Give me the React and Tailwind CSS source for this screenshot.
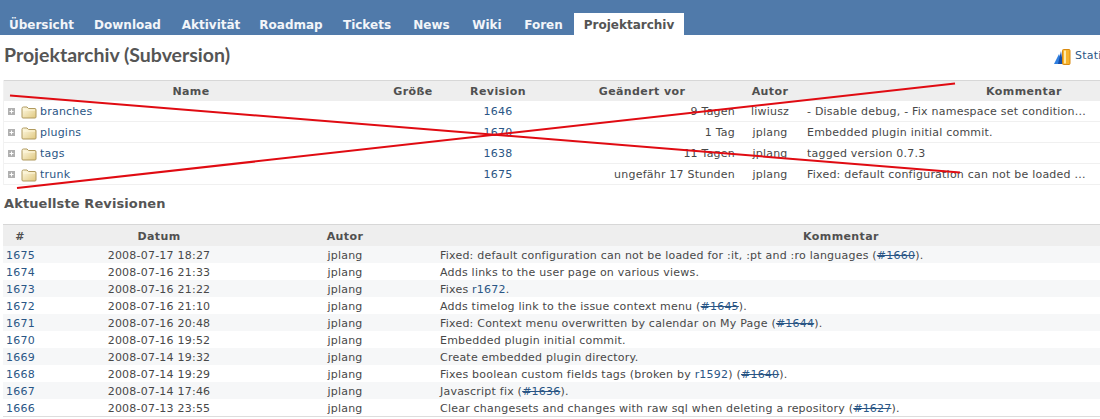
const F = "font-['DejaVu_Sans','Liberation_Sans',sans-serif]";

function Folder() {
  return (
    <svg width="16" height="14" viewBox="0 0 16 14" className="shrink-0">
      <defs>
        <linearGradient id="fg" x1="0" y1="0" x2="1" y2="1">
          <stop offset="0" stopColor="#fffbe8" />
          <stop offset="1" stopColor="#e0c87e" />
        </linearGradient>
      </defs>
      <path d="M1 3.5 Q1 2 2.5 2 L6 2 L7.5 3.5 L14 3.5 Q15 3.5 15 5 L15 12 Q15 13 14 13 L2 13 Q1 13 1 12 Z" fill="url(#fg)" stroke="#b09a5e" strokeWidth="1" />
      <path d="M2 5 L14 5" stroke="#fff8dc" strokeWidth="1" />
    </svg>
  );
}

function Plus() {
  return (
    <svg width="7" height="7" viewBox="0 0 7 7" className="shrink-0">
      <rect x="0" y="0" width="7" height="7" fill="#b0b0b0" />
      <path d="M3.5 1.5 V5.5 M1.5 3.5 H5.5" stroke="#fff" strokeWidth="1" />
    </svg>
  );
}

function StatsIcon() {
  return (
    <svg width="17" height="16" viewBox="0 0 17 16" className="shrink-0">
      <path d="M0 15 L5 5 L9 15 Z" fill="#2f7fe0" />
      <path d="M4 15 L7 2 L9 15 Z" fill="#174ea8" />
      <rect x="8.5" y="0.5" width="7.5" height="15" rx="1" fill="#f7b32b" stroke="#d98a10" />
      <rect x="10" y="1.5" width="2" height="13" fill="#ffe9a8" />
    </svg>
  );
}

const tabs = [
  ["Übersicht", "w-[83px]"],
  ["Download", "w-[89px]"],
  ["Aktivität", "w-[78px]"],
  ["Roadmap", "w-[82px]"],
  ["Tickets", "w-[70px]"],
  ["News", "w-[59px]"],
  ["Wiki", "w-[52px]"],
  ["Foren", "w-[61px]"],
];

const tree = [
  ["branches", "1646", "9 Tagen", "liwiusz", "- Disable debug, - Fix namespace set condition..."],
  ["plugins", "1670", "1 Tag", "jplang", "Embedded plugin initial commit."],
  ["tags", "1638", "11 Tagen", "jplang", "tagged version 0.7.3"],
  ["trunk", "1675", "ungefähr 17 Stunden", "jplang", "Fixed: default configuration can not be loaded ..."],
];

const A = ({ children, del }) => (
  <a className={`text-[#2a5685] ${del ? "line-through" : ""}`}>{children}</a>
);

const revs = [
  ["1675", "2008-07-17 18:27", <>Fixed: default configuration can not be loaded for :it, :pt and :ro languages (<A del>#1660</A>).</>],
  ["1674", "2008-07-16 21:33", <>Adds links to the user page on various views.</>],
  ["1673", "2008-07-16 21:22", <>Fixes <A>r1672</A>.</>],
  ["1672", "2008-07-16 21:10", <>Adds timelog link to the issue context menu (<A del>#1645</A>).</>],
  ["1671", "2008-07-16 20:48", <>Fixed: Context menu overwritten by calendar on My Page (<A del>#1644</A>).</>],
  ["1670", "2008-07-16 19:52", <>Embedded plugin initial commit.</>],
  ["1669", "2008-07-14 19:32", <>Create embedded plugin directory.</>],
  ["1668", "2008-07-14 19:29", <>Fixes boolean custom fields tags (broken by <A>r1592</A>) (<A del>#1640</A>).</>],
  ["1667", "2008-07-14 17:46", <>Javascript fix (<A del>#1636</A>).</>],
  ["1666", "2008-07-13 23:55", <>Clear changesets and changes with raw sql when deleting a repository (<A del>#1627</A>).</>],
];

const cols1 = "grid grid-cols-[374px_70px_100px_188px_68px_440px]";
const cols2 = "grid grid-cols-[34px_27px_190px_182px_810px]";

export default function App() {
  return (
    <div className={`${F} relative w-[1100px] h-[419px] overflow-hidden bg-white text-[11px] text-[#484848] tracking-[0.22px]`}>
      <nav className="h-[35px] bg-[#507aaa] flex items-end tracking-normal">
        {tabs.map(([t, w]) => (
          <span key={t} className={`${w} h-[22px] leading-[24px] text-center font-bold text-[#f2f5f9] text-[12px] shrink-0`}>{t}</span>
        ))}
        <span className="w-[110px] h-[22px] leading-[24px] text-center font-bold text-[12px] text-[#555] bg-white shrink-0">Projektarchiv</span>
      </nav>

      <div className="w-[1300px] pt-[8px]">
        <div className="flex items-center h-[27px]">
          <h2 className="pl-[4px] w-[1054px] font-['Lato','DejaVu_Sans',sans-serif] text-[19.5px] leading-[23px] pb-[4px] font-bold text-[#555] tracking-normal">Projektarchiv (Subversion)</h2>
          <StatsIcon />
          <a className="ml-[4px] text-[#2a5685]">Statistiken</a>
        </div>

        <div className="ml-[3px] w-[1240px] mt-[10px] border-l border-[#f2f2f2]">
          <div className={`${cols1} h-[21px] leading-[21px] bg-[#eeeeee] border-t border-[#d7d7d7] font-bold text-center text-[#505050] tracking-[0.4px]`}>
            <div>Name</div><div>Größe</div><div>Revision</div><div>Geändert vor</div><div>Autor</div><div>Kommentar</div>
          </div>
          {tree.map(([name, rev, age, author, msg]) => (
            <div key={name} className={`${cols1} h-[21px] leading-[21px] border-b border-[#f0f0f0]`}>
              <div className="flex items-center pl-[4px]">
                <Plus />
                <span className="ml-[6px]"><Folder /></span>
                <a className="ml-[3px] text-[#2a5685]">{name}</a>
              </div>
              <div />
              <a className="text-center text-[#2a5685]">{rev}</a>
              <div className="text-right pr-[1px]">{age}</div>
              <div className="text-center">{author}</div>
              <div className="pl-[3px] whitespace-nowrap">{msg}</div>
            </div>
          ))}
        </div>

        <h3 className="pl-[4px] mt-[9px] h-[20px] leading-[20px] text-[13px] font-bold text-[#555] tracking-[0.1px]">Aktuellste Revisionen</h3>

        <div className="ml-[3px] w-[1243px] mt-[10px] border-b border-[#dddddd]">
          <div className={`${cols2} h-[22px] leading-[24px] bg-[#eeeeee] border-t border-[#d7d7d7] font-bold text-center text-[#505050] tracking-[0.4px]`}>
            <div>#</div><div /><div>Datum</div><div>Autor</div><div>Kommentar</div>
          </div>
          {revs.map(([id, date, msg], i) => (
            <div key={id} className={`${cols2} h-[17px] leading-[19px] ${i % 2 === 0 ? "bg-[#f6f7f8]" : "bg-white"}`}>
              <a className="pl-[3px] text-[#2a5685]">{id}</a>
              <div />
              <div className="text-center">{date}</div>
              <div className="text-center">jplang</div>
              <div className="pl-[4px] whitespace-nowrap">{msg}</div>
            </div>
          ))}
        </div>
      </div>

      <svg className="absolute left-0 top-0 pointer-events-none" width="1100" height="419" viewBox="0 0 1100 419">
        <path d="M10 95.5 L960 172.5" stroke="#e00b12" strokeWidth="2" fill="none" />
        <path d="M17 188 L955 83.5" stroke="#e00b12" strokeWidth="2" fill="none" />
      </svg>
    </div>
  );
}
